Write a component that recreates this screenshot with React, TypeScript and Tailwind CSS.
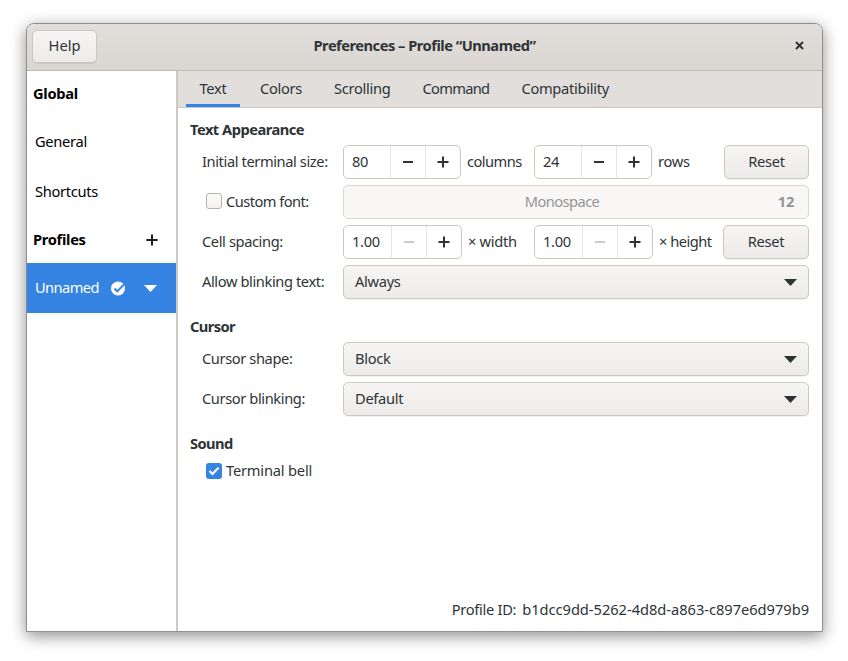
import React from 'react';

const Plus = ({ dim }: { dim?: boolean }) => (
  <svg width="12" height="12" viewBox="0 0 12 12" className={dim ? 'text-[#c4c6c6]' : 'text-[#2e3436]'}>
    <path d="M0.5 6h11M6 0.5v11" stroke="currentColor" strokeWidth="2" fill="none" />
  </svg>
);

const Minus = ({ dim }: { dim?: boolean }) => (
  <svg width="12" height="12" viewBox="0 0 12 12" className={dim ? 'text-[#c9caca]' : 'text-[#2e3436]'}>
    <path d="M1 6h10" stroke="currentColor" strokeWidth="2" fill="none" />
  </svg>
);

const Caret = ({ className }: { className: string }) => (
  <svg width="13" height="7" viewBox="0 0 13 7" className={className}>
    <path d="M0 0h13L6.5 7z" fill="currentColor" />
  </svg>
);

function SpinBox({ value, wide, minusDim }: { value: string; wide?: boolean; minusDim?: boolean }) {
  return (
    <div className={`flex h-[34px] shrink-0 rounded-[5px] border border-[#cdc7c2] bg-white ${wide ? 'w-[119px]' : 'w-[118px]'}`}>
      <div className={`flex items-center pb-[2px] pl-[8px] text-[#2e3436] ${wide ? 'w-[47px]' : 'w-[46px]'}`}>{value}</div>
      <div className="flex w-[35px] items-center justify-center border-l border-[#e8e6e3]">
        <Minus dim={minusDim} />
      </div>
      <div className="flex flex-1 items-center justify-center border-l border-[#e8e6e3]">
        <Plus />
      </div>
    </div>
  );
}

function ResetButton({ wide }: { wide?: boolean }) {
  return (
    <div
      className={`flex h-[34px] shrink-0 items-center justify-center rounded-[5px] border border-[#cdc7c2] bg-gradient-to-b from-[#f6f5f4] to-[#edebe9] pb-[2px] text-[#2e3436] shadow-[0_1px_0_rgba(0,0,0,0.05)] ${wide ? 'w-[86px]' : 'w-[85px]'}`}
    >
      Reset
    </div>
  );
}

function SelectBox({ value }: { value: string }) {
  return (
    <div className="flex h-[34px] w-[466px] shrink-0 items-center justify-between rounded-[5px] border border-[#cdc7c2] bg-gradient-to-b from-[#f6f5f4] to-[#edebe9] pl-[11px] pr-[11px] text-[#2e3436] shadow-[0_1px_0_rgba(0,0,0,0.05)]">
      <span className="pb-[2px]">{value}</span>
      <Caret className="text-[#2e3436]" />
    </div>
  );
}

function Row({ label, children }: { label: React.ReactNode; children: React.ReactNode }) {
  return (
    <div className="flex h-[34px] items-center">
      <div className="flex w-[153px] shrink-0 items-center whitespace-nowrap pb-[2px] pl-[12px] tracking-[-0.4px]">{label}</div>
      {children}
    </div>
  );
}

function SideRow({ children }: { children: React.ReactNode }) {
  return <div className="flex h-[50px] items-center pb-[2px] pl-[8px] text-black">{children}</div>;
}

export default function App() {
  const tabs = ['Colors', 'Scrolling', 'Command', 'Compatibility'];

  return (
    <div
      className="h-[661px] w-[848px] overflow-hidden bg-white pl-[26px] pt-[23px] text-[14.67px] tracking-[-0.3px] text-[#2e3436]"
      style={{ fontFamily: '"Noto Sans", sans-serif' }}
    >
      <div className="flex h-[609px] w-[797px] flex-col overflow-hidden rounded-t-[8px] border border-[#8f8f8b] bg-white shadow-[0_4px_16px_rgba(0,0,0,0.45)]">
        {/* Title bar */}
        <div className="relative flex h-[47px] shrink-0 items-center border-b border-[#bfb8b1] bg-gradient-to-b from-[#e1dedb] to-[#dad6d2] pb-[2px] pl-[5px]">
          <div className="flex h-[33px] w-[65px] items-center justify-center rounded-[5px] border border-[#cdc7c2] bg-gradient-to-b from-[#f6f5f4] to-[#edebe9] pb-[2px] tracking-normal text-[#2e3436] shadow-[0_1px_0_rgba(0,0,0,0.07)]">
            Help
          </div>
          <div className="absolute inset-x-0 pb-[2px] text-center font-bold tracking-[-0.5px] text-[#2e3436]">
            Preferences – Profile “Unnamed”
          </div>
          <svg width="9" height="9" viewBox="0 0 9 9" className="absolute right-[18px] top-[17px] text-[#2e3436]">
            <path d="M1 1l7 7M8 1l-7 7" stroke="currentColor" strokeWidth="2" fill="none" />
          </svg>
        </div>

        <div className="flex min-h-0 flex-1">
          {/* Sidebar */}
          <div className="w-[151px] shrink-0 border-r-2 border-[#cdc9c4] bg-white">
            <div className="flex h-[46px] items-center pb-[2px] pl-[6px] font-bold text-black">Global</div>
            <SideRow>General</SideRow>
            <SideRow>Shortcuts</SideRow>
            <div className="flex h-[46px] items-center justify-between pl-[6px] pr-[18px] font-bold text-black">
              <span className="pb-[2px]">Profiles</span>
              <svg width="12" height="12" viewBox="0 0 12 12" className="text-[#1c1f20]">
                <path d="M0.5 6h11M6 0.5v11" stroke="currentColor" strokeWidth="2" fill="none" />
              </svg>
            </div>
            <div className="flex h-[50px] w-[149px] items-center bg-[#3584e4] pl-[8px] text-white">
              <span className="w-[76px] pb-[2px] tracking-[-0.6px]">Unnamed</span>
              <svg width="15" height="15" viewBox="0 0 15 15">
                <circle cx="7" cy="7.5" r="7" fill="#fff" />
                <path d="M3.5 7.5l2.8 2.9L13 3.4" stroke="#3584e4" strokeWidth="2" fill="none" />
              </svg>
              <Caret className="ml-[18px] text-white" />
            </div>
          </div>

          {/* Main panel */}
          <div className="flex min-w-0 flex-1 flex-col">
            <div className="flex h-[37px] shrink-0 border-b border-[#cdc7c2] bg-[#e1dedb] pl-[8px]">
              <div className="flex w-[54px] items-center justify-center border-b-[3px] border-[#3584e4] text-[#2e3436]">
                Text
              </div>
              {tabs.map((tab) => (
                <div
                  key={tab}
                  className={`ml-[10px] flex items-center pb-[3px] pl-[10px] pr-[12px] text-[#2e3436] ${tab === 'Command' ? 'tracking-[-0.7px]' : ''}`}
                >
                  {tab}
                </div>
              ))}
            </div>

            <div className="flex flex-1 flex-col pl-[12px] pr-[13px]">
              <div className="flex h-[37px] items-center pb-[2px] pt-[7px] font-bold tracking-[-0.5px]">Text Appearance</div>
              <div className="flex flex-col gap-[6px]">
                <Row label="Initial terminal size:">
                  <SpinBox value="80" />
                  <span className="ml-[6px] w-[67px] pb-[2px] tracking-[-0.55px]">columns</span>
                  <SpinBox value="24" />
                  <span className="ml-[6px] w-[66px] pb-[2px]">rows</span>
                  <ResetButton />
                </Row>
                <Row
                  label={
                    <span className="flex items-center pl-[4px]">
                      <span className="mr-[4px] h-[16px] w-[16px] rounded-[3px] border border-[#b8b3ae] bg-gradient-to-b from-[#fbfafa] to-[#f3f2f1]" />
                      <span className="tracking-[-0.55px]">Custom font:</span>
                    </span>
                  }
                >
                  <div className="relative flex h-[34px] w-[466px] shrink-0 items-center justify-center rounded-[5px] border border-[#dbd8d4] bg-[#f8f7f6] pb-[2px] pr-[28px] text-[#929595]">
                    <span className="tracking-[-0.55px]">Monospace</span>
                    <span className="absolute right-[14px] font-bold">12</span>
                  </div>
                </Row>
                <Row label="Cell spacing:">
                  <SpinBox value="1.00" wide minusDim />
                  <span className="ml-[6px] w-[66px] pb-[2px]">× width</span>
                  <SpinBox value="1.00" wide minusDim />
                  <span className="ml-[6px] w-[64px] pb-[2px] tracking-[-0.5px]">× height</span>
                  <ResetButton wide />
                </Row>
                <Row label="Allow blinking text:">
                  <SelectBox value="Always" />
                </Row>
              </div>

              <div className="mt-[18px] flex h-[20px] items-center pb-[2px] font-bold tracking-[-0.6px]">Cursor</div>
              <div className="mt-[5px] flex flex-col gap-[6px]">
                <Row label="Cursor shape:">
                  <SelectBox value="Block" />
                </Row>
                <Row label="Cursor blinking:">
                  <SelectBox value="Default" />
                </Row>
              </div>

              <div className="mt-[18px] flex h-[20px] items-center pb-[2px] font-bold tracking-[-0.6px]">Sound</div>
              <div className="mt-[7px] flex h-[20px] items-center pl-[16px]">
                <svg width="16" height="16" viewBox="0 0 16 16" className="mr-[4px]">
                  <rect width="16" height="16" rx="3" fill="#3584e4" />
                  <path d="M3.5 8l3 3 6-6.2" stroke="#fff" strokeWidth="2.2" fill="none" />
                </svg>
                <span className="pb-[2px] tracking-[-0.2px]">Terminal bell</span>
              </div>

              <div className="mt-auto flex h-[33px] items-start justify-end gap-[6px]">
                <span>Profile ID:</span>
                <span className="tracking-[-0.03px]">b1dcc9dd-5262-4d8d-a863-c897e6d979b9</span>
              </div>
            </div>
          </div>
        </div>
      </div>
    </div>
  );
}
